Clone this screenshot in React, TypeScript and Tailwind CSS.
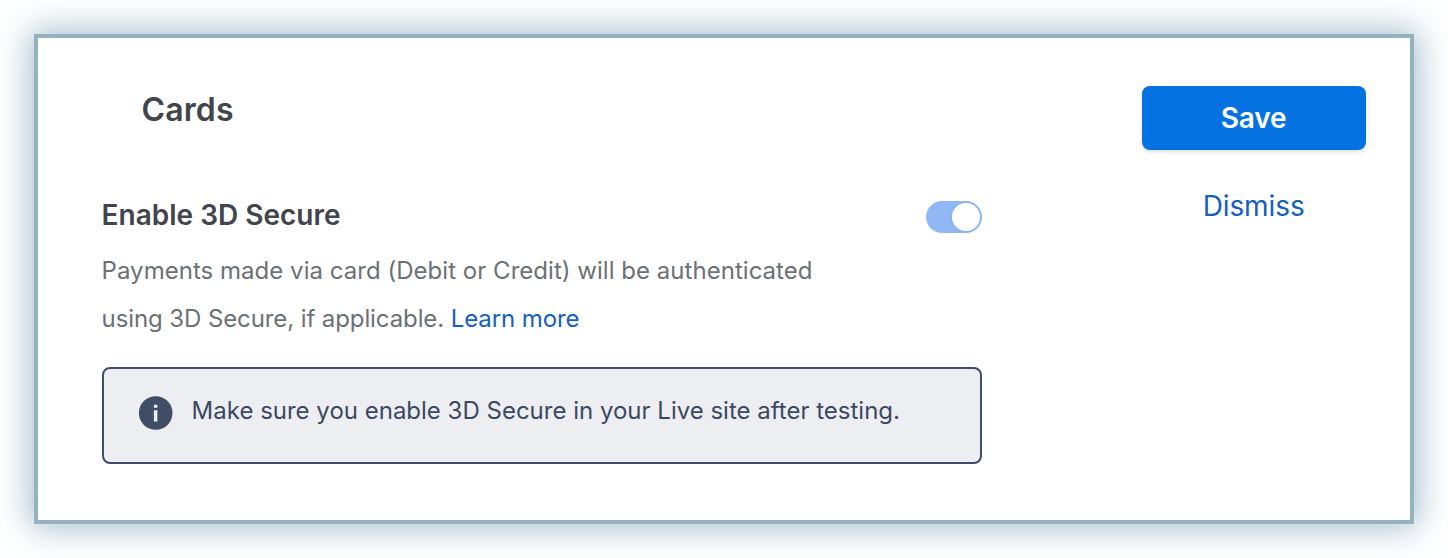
export default function App() {
  return (
    <div className="h-[558px] w-[1448px] overflow-hidden bg-white p-[34px] font-['Inter',sans-serif]">
      <main className="flex h-[490px] w-[1380px] items-start border-4 border-[#93b1bf] bg-white pl-[63.6px] shadow-[0_0_32px_3px_rgba(140,172,188,0.83)]">
        <section className="w-[880px] shrink-0">
          <h1 className="ml-10 mt-[52px] text-[32px] font-semibold leading-10 tracking-[0.1px] text-[#42454c]">Cards</h1>
          <div className="mt-[71px] flex h-8 items-center justify-between">
            <h2 className="-mt-1 text-[28px] font-semibold leading-8 text-[#42454c]">Enable 3D Secure</h2>
            <button aria-label="Enable 3D Secure" className="flex h-8 w-14 items-center justify-end rounded-full bg-[#8fb8f4] p-0.5">
              <span className="size-7 rounded-full bg-white shadow-[0_0_4px_rgba(80,120,180,0.15)]" />
            </button>
          </div>
          <p className="mt-[14px] text-[24px] leading-[48px] text-[#6c7077]">
            <span className="block tracking-[0.03px]">Payments made via card (Debit or Credit) will be authenticated</span>
            <span className="block tracking-[-0.1px]">using 3D Secure, if applicable. <a className="text-[#1560bd]">Learn more</a></span>
          </p>
          <div className="mt-6 flex h-[97px] items-start rounded-lg border-2 border-[#3f4e65] bg-[#edeef2] pl-[35px] pt-[27px]">
            <svg viewBox="0 0 34 34" className="size-[34px]">
              <circle cx="16.7" cy="17" r="16.8" fill="#3f4e65" />
              <path d="M14.9 8.7h3.5v3.1h-3.5zM14.9 14.3h3.5v11.2h-3.5z" fill="#edeef2" />
            </svg>
            <span className="-mt-px ml-[19px] text-[24px] leading-8 text-[#3b4960]">Make sure you enable 3D Secure in your Live site after testing.</span>
          </div>
        </section>
        <aside className="ml-[160px] mt-12 flex w-56 flex-col items-center">
          <button className="h-16 w-full rounded-lg bg-[#0572e2] text-[28px] font-semibold tracking-[-0.1px] text-white shadow-[0_2px_4px_rgba(0,0,0,0.12)]">Save</button>
          <a className="mt-[38px] text-[28px] leading-9 tracking-[-0.1px] text-[#1560bd]">Dismiss</a>
        </aside>
      </main>
    </div>
  );
}
